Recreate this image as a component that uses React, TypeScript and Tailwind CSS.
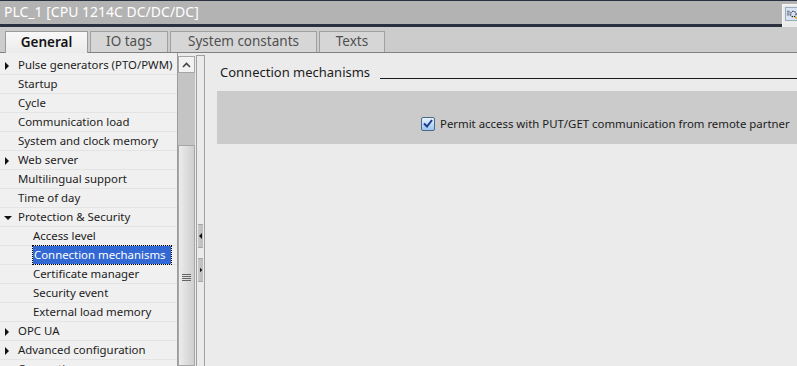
import clsx from "clsx"

type Row = { label: string; level: 0 | 1; arrow?: "right" | "down"; selected?: boolean }

const rows: Row[] = [
  { label: "Pulse generators (PTO/PWM)", level: 0, arrow: "right" },
  { label: "Startup", level: 0 },
  { label: "Cycle", level: 0 },
  { label: "Communication load", level: 0 },
  { label: "System and clock memory", level: 0 },
  { label: "Web server", level: 0, arrow: "right" },
  { label: "Multilingual support", level: 0 },
  { label: "Time of day", level: 0 },
  { label: "Protection & Security", level: 0, arrow: "down" },
  { label: "Access level", level: 1 },
  { label: "Connection mechanisms", level: 1, selected: true },
  { label: "Certificate manager", level: 1 },
  { label: "Security event", level: 1 },
  { label: "External load memory", level: 1 },
  { label: "OPC UA", level: 0, arrow: "right" },
  { label: "Advanced configuration", level: 0, arrow: "right" },
  { label: "Connection resources", level: 0 },
]

const tabs = [
  { label: "General", active: true, w: "w-[83px]" },
  { label: "IO tags", w: "w-[78px]" },
  { label: "System constants", w: "w-[147px]" },
  { label: "Texts", w: "w-[66px]" },
]

const Arrow = ({ dir }: { dir: "right" | "down" }) =>
  dir === "right" ? (
    <svg width="5" height="8" viewBox="0 0 5 8" className="absolute left-[5px] top-[6px]">
      <path d="M0 0 L4 4 L0 8 Z" fill="#111" />
    </svg>
  ) : (
    <svg width="8" height="5" viewBox="0 0 8 5" className="absolute left-[4px] top-[8px]">
      <path d="M0 0 L8 0 L4 4 Z" fill="#111" />
    </svg>
  )

const TreeRow = ({ row }: { row: Row }) => (
  <div className="relative h-[19px] border-b border-[#e4e4e4] text-[11.4px] leading-[18px] text-[#1c1c1c]">
    {row.arrow && <Arrow dir={row.arrow} />}
    <span
      className={clsx(
        "absolute top-0 whitespace-nowrap",
        row.level === 0 ? "left-[18px]" : "left-[33px]",
        row.selected && "bg-[#3268d3] text-white outline outline-1 outline-dotted outline-black pl-[1px] w-[138px]",
      )}
    >
      {row.label}
    </span>
  </div>
)

const App = () => {
  return (
    <div className="w-[797px] h-[366px] overflow-hidden bg-[#ebebeb] flex flex-col font-['Noto_Sans','Liberation_Sans',sans-serif]">
      {/* title bar */}
      <div className="relative h-[27px] shrink-0 bg-[#b3b3b3] border-t border-[#2a3040] border-b-[3px] border-b-[#2a3040] flex items-center pl-[4px]">
        <span className="text-white text-[14px] leading-none pb-[2px]">PLC_1 [CPU 1214C DC/DC/DC]</span>
        <div className="absolute right-0 top-[3px] -bottom-[3px] w-[15px] bg-[#ebebeb] border-l border-t border-[#f8f8f8] pl-[2px] pt-[2px]">
          <div className="w-[13px] h-[14px] bg-[#d8e4f4] border border-[#9ab] flex items-center">
            <svg width="12" height="12" viewBox="0 0 12 12">
              <path d="M1 3h3M1 5h3M1 7h3" stroke="#556" strokeWidth="1" />
              <circle cx="8" cy="6" r="3" fill="none" stroke="#223" strokeWidth="1.2" strokeDasharray="1.5 1" />
              <path d="M10 9l2 2" stroke="#d9a400" strokeWidth="1.5" />
            </svg>
          </div>
        </div>
      </div>

      {/* tabs */}
      <div className="h-[26px] shrink-0 bg-[#cccccc] border-b border-[#808080] flex items-end pl-[5px] gap-[2px]">
        {tabs.map((tab) => (
          <div
            key={tab.label}
            className={clsx(
              "h-[21px] -mb-px flex items-center justify-center border border-b-0 text-[13.5px] leading-none",
              tab.w,
              tab.active
                ? "bg-gradient-to-b from-[#f8f8f8] to-[#ebebeb] border-[#9a9a9a] text-[#141414] font-semibold h-[22px]"
                : "bg-[#d6d6d6] border-[#a0a0a0] text-[#505050] mb-0",
            )}
          >
            {tab.label}
          </div>
        ))}
      </div>

      {/* body */}
      <div className="flex flex-1 min-h-0">
        <div className="w-[178px] shrink-0 bg-[#f0f0f0] border-r border-[#9c9c9c] pt-[3px] overflow-hidden">
          {rows.map((row) => (
            <TreeRow key={row.label} row={row} />
          ))}
        </div>

        {/* scrollbar */}
        <div className="w-[18px] shrink-0 flex flex-col pt-[3px] pr-[1px]">
          <div className="h-[17px] bg-[#f2f2f2] border border-[#a6a6a6] flex items-center justify-center">
            <svg width="9" height="6" viewBox="0 0 9 6">
              <path d="M1 5 L4.5 1.5 L8 5" fill="none" stroke="#444" strokeWidth="1.6" />
            </svg>
          </div>
          <div className="h-[72px] bg-[#c4c4c4]" />
          <div className="flex-1 border border-[#a6a6a6] bg-gradient-to-r from-[#ececec] to-[#cfcfcf] flex flex-col items-center pt-[128px] gap-[1px]">
            {[0, 1, 2, 3].map((i) => (
              <div key={i} className="w-[9px] h-px bg-[#666]" />
            ))}
          </div>
        </div>

        {/* splitter */}
        <div className="w-[9px] shrink-0 mt-[2px] border-x border-t border-[#a0a0a0] flex flex-col pt-[168px] px-px">
          <div className="h-[24px] bg-gradient-to-r from-[#c8c8c8] to-[#bdbdbd] border-y border-[#a8a8a8] flex items-center">
            <svg width="4" height="6" viewBox="0 0 4 6" className="ml-[1px]">
              <path d="M3 0 L0 3 L3 6 Z" fill="#111" />
            </svg>
          </div>
          <div className="h-[10px]" />
          <div className="h-[24px] bg-gradient-to-r from-[#c8c8c8] to-[#bdbdbd] border-y border-[#a8a8a8] flex items-center">
            <svg width="4" height="6" viewBox="0 0 4 6" className="ml-[2px]">
              <path d="M0 0 L3 3 L0 6 Z" fill="#111" />
            </svg>
          </div>
        </div>

        {/* content */}
        <div className="flex-1 min-w-0">
          <div className="flex items-end pl-[15px] pt-[12px] h-[27px]">
            <span className="text-[13px] leading-none text-[#1c1c1c] whitespace-nowrap pb-px">Connection mechanisms</span>
            <div className="flex-1 ml-[10px] mb-[1px] h-px bg-[#1c1c1c]" />
          </div>
          <div className="ml-[12px] mt-[11px] h-[53px] bg-[#cbcbcb] flex items-center pl-[204px] pt-[12px]">
            <div className="w-[14px] h-[14px] rounded-[2px] border border-[#4a6a8a] bg-gradient-to-b from-[#e8f2ff] to-[#9cc4ee] flex items-center justify-center">
              <svg width="10" height="9" viewBox="0 0 10 9">
                <path d="M1 4.5 L4 7.5 L9 1" fill="none" stroke="#1a3d8c" strokeWidth="2" />
              </svg>
            </div>
            <span className="ml-[5px] text-[11.4px] leading-none text-[#1c1c1c] whitespace-nowrap">
              Permit access with PUT/GET communication from remote partner
            </span>
          </div>
        </div>
      </div>
    </div>
  )
}

export default App
